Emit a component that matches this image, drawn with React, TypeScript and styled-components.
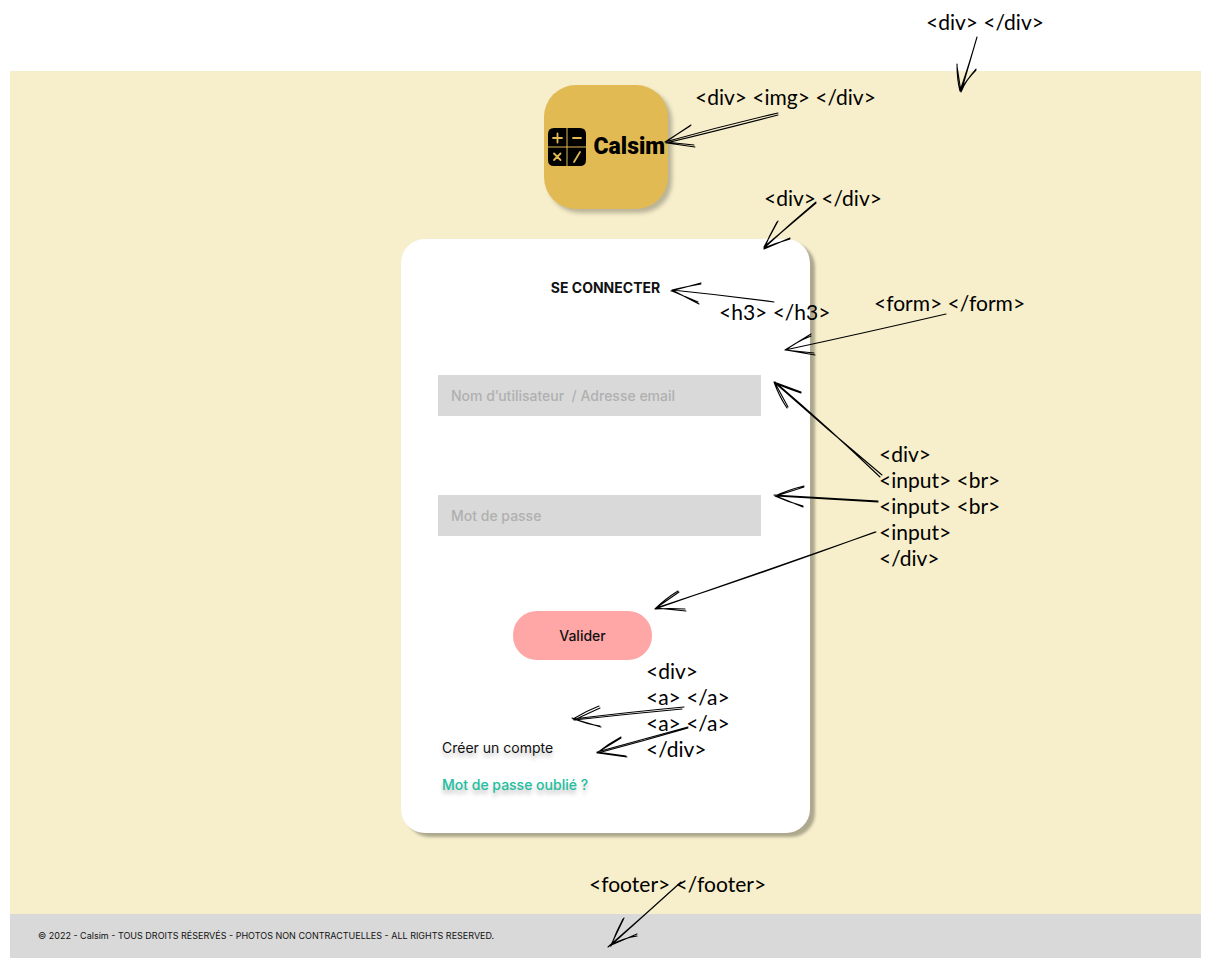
import React from "react";
import styled, { createGlobalStyle } from "styled-components";

const GlobalStyle = createGlobalStyle`
  *, *::before, *::after { box-sizing: border-box; }
  body {
    margin: 0;
    background: #fff;
    color: #111;
    font-family: Inter, "Liberation Sans", sans-serif;
    font-size: 14px;
    line-height: 20px;
  }
`;

const Page = styled.div`
  position: relative;
  min-height: 100vh;
  padding: 71px 10px 10px;
  display: flex;
  flex-direction: column;
  overflow-x: hidden;
`;

const Main = styled.main`
  flex: 1;
  display: flex;
  flex-direction: column;
  align-items: center;
  gap: 30px;
  padding: 14px 0 80px;
  background: #f7efcb;
`;

const LogoTile = styled.div`
  width: 124px;
  height: 124px;
  padding-left: 4px;
  display: flex;
  align-items: center;
  gap: 8px;
  border-radius: 32px;
  background: #e1ba54;
  box-shadow: 4px 4px 4px rgba(0, 0, 0, 0.25);
  color: #000;
`;

const LogoMark = styled.svg`
  flex: none;
  width: 38px;
  height: 38px;
`;

const LogoName = styled.span`
  font-family: Roboto, "Liberation Sans", sans-serif;
  font-size: 23px;
  font-weight: 900;
  line-height: 28px;
`;

const Card = styled.section`
  width: 409px;
  max-width: 100%;
  padding: 39px 0 38px;
  border-radius: 24px;
  background: #fff;
  box-shadow: 5px 4px 3px rgba(0, 0, 0, 0.3);
`;

const Title = styled.h3`
  margin: 0;
  text-align: center;
  font-size: 14px;
  font-weight: 700;
  line-height: 20px;
`;

const LoginForm = styled.form`
  display: flex;
  flex-direction: column;
  padding: 77px 49px 0 37px;
`;

const Field = styled.input`
  width: 100%;
  height: 41px;
  margin-bottom: 79px;
  padding: 0 13px;
  border: 0;
  border-radius: 0;
  background: #d9d9d9;
  color: #111;
  font: 500 14px/20px Inter, "Liberation Sans", sans-serif;
  &::placeholder {
    color: #b0b0b0;
    opacity: 1;
  }
`;

const Submit = styled.button`
  width: 139px;
  height: 49px;
  margin: -4px 0 0 75px;
  border: 0;
  border-radius: 24px;
  background: #ffa6a6;
  color: #111;
  font: 500 14px/20px Inter, "Liberation Sans", sans-serif;
`;

const Links = styled.nav`
  display: flex;
  flex-direction: column;
  align-items: flex-start;
  gap: 17px;
  padding: 78px 41px 0;
`;

const TextLink = styled.a<{ $accent?: boolean }>`
  color: ${(p) => (p.$accent ? "#22bf9f" : "#111")};
  font-weight: ${(p) => (p.$accent ? 500 : 400)};
  text-decoration: none;
  text-shadow: 0 4px 4px rgba(0, 0, 0, 0.25);
`;

const Footer = styled.footer`
  padding: 12px 28px;
  background: #d9d9d9;
  font-size: 9px;
  line-height: 20px;
`;

/* Notes are anchored to the horizontal centre of the page. */
const NoteLayer = styled.div`
  position: absolute;
  inset: 0;
  display: flex;
  justify-content: center;
  pointer-events: none;
`;

const Anchor = styled.div`
  position: relative;
  width: 1px;
`;

const Arrows = styled.svg`
  position: absolute;
  top: 0;
  left: 0;
  width: 1px;
  height: 1px;
  overflow: visible;
  fill: none;
  stroke: #000;
  stroke-width: 1.1;
  stroke-linecap: round;
`;

const Note = styled.div<{ $x: number; $y: number }>`
  position: absolute;
  left: ${(p) => p.$x}px;
  top: ${(p) => p.$y}px;
  color: #000;
  font-family: Lato, "Liberation Sans", sans-serif;
  font-size: 21px;
  line-height: 26px;
  white-space: pre;
`;

const notes = [
  { x: 321, y: 9, text: "<div> </div>" },
  { x: 90, y: 84, text: "<div> <img> </div>" },
  { x: 159, y: 185, text: "<div> </div>" },
  { x: 114, y: 299, text: "<h3> </h3>" },
  { x: 269, y: 290, text: "<form> </form>" },
  { x: 274, y: 441, text: "<div>\n<input> <br>\n<input> <br>\n<input>\n</div>" },
  { x: 41, y: 658, text: "<div>\n<a> </a>\n<a> </a>\n</div>" },
  { x: -16, y: 871, text: "<footer> </footer>" },
];

const arrows = [
  "M977 37 Q970 62 960 91 M977 37 Q968 68 961 92 M957 64 Q957 80 960 91 M957 66 L961 92 M976 70 Q968 78 960 91 M976 69 Q966 80 961 92",
  "M778 113 Q722 126 665 142 M778 115 Q720 130 666 143 M690 126 L665 142 M691 125 L667 141 M694 145 L665 142 M695 147 L667 143",
  "M816 202 Q790 224 764 248 M816 203 L764 247 M777 222 Q769 236 764 249 M778 221 L764 247 M790 238 L764 249 M790 239 Q776 243 764 248",
  "M774 302 Q722 295 672 290 M701 283 L671 291 M701 284 Q684 287 672 290 M698 302 L672 291 M699 304 L672 290",
  "M946 314 Q864 333 785 350 M811 334 L785 350 M811 336 Q796 342 786 350 M814 353 L785 350 M815 355 L786 350",
  "M880 477 Q830 429 775 382 M882 475 Q828 430 774 382 M801 393 Q786 388 775 383 M801 392 L774 382 M787 408 Q779 396 774 382 M788 407 L775 383",
  "M878 501 Q826 498 774 495 M878 502 L776 496 M804 486 Q788 490 775 496 M804 487 L776 496 M803 506 Q788 502 775 496 M803 507 L776 496",
  "M876 532 L655 609 M875 532 Q772 570 656 608 M678 591 Q665 599 655 609 M679 592 L656 608 M685 609 Q668 608 655 609 M686 611 L656 608",
  "M684 707 Q630 712 573 719 M682 709 Q628 714 574 720 M599 706 Q586 711 573 719 M600 708 L574 720 M600 726 Q586 724 572 718 M601 727 L574 719",
  "M688 728 Q643 741 598 753 M688 727 L597 752 M621 737 Q608 744 597 753 M621 738 L598 752 M626 756 L597 752 M627 757 L598 753",
  "M681 882 Q646 914 608 947 M680 883 L610 946 M623 919 Q616 932 611 946 M624 918 L611 945 M637 934 L609 946 M637 936 Q624 938 610 945",
];

export default function App() {
  return (
    <>
      <GlobalStyle />
      <Page>
        <Main>
          <LogoTile>
            <LogoMark viewBox="0 0 38 38" aria-hidden="true">
              <path
                fill="currentColor"
                d="M6 0H18.5V18.5H0V6Q0 0 6 0ZM19.5 0H32Q38 0 38 6V18.5H19.5ZM0 19.5H18.5V38H6Q0 38 0 32ZM19.5 19.5H38V32Q38 38 32 38H19.5Z"
              />
              <path
                fill="none"
                stroke="#e1ba54"
                strokeWidth="1.8"
                strokeLinecap="round"
                d="M5 10H14M9.500 5.500V14.500M25 10H33M6 25.500L12.500 32M12.500 25.500L6 32M32 24L26 34"
              />
            </LogoMark>
            <LogoName>Calsim</LogoName>
          </LogoTile>
          <Card>
            <Title>SE CONNECTER</Title>
            <LoginForm onSubmit={(e) => e.preventDefault()}>
              <Field
                type="text"
                aria-label="Nom d’utilisateur / Adresse email"
                placeholder={"Nom d’utilisateur\u00a0 / Adresse email"}
              />
              <Field type="password" aria-label="Mot de passe" placeholder="Mot de passe" />
              <Submit type="submit">Valider</Submit>
            </LoginForm>
            <Links>
              <TextLink href="#inscription">Créer un compte</TextLink>
              <TextLink href="#oubli" $accent>
                Mot de passe oublié ?
              </TextLink>
            </Links>
          </Card>
        </Main>
        <Footer>
          © 2022 - Calsim - TOUS DROITS RÉSERVÉS - PHOTOS NON CONTRACTUELLES - ALL RIGHTS RESERVED.
        </Footer>
        <NoteLayer>
          <Anchor>
            <Arrows viewBox="605 0 1 1" aria-hidden="true">
              {arrows.map((d) => (
                <path key={d} d={d} />
              ))}
            </Arrows>
            {notes.map((n) => (
              <Note key={`${n.x}-${n.y}`} $x={n.x} $y={n.y}>
                {n.text}
              </Note>
            ))}
          </Anchor>
        </NoteLayer>
      </Page>
    </>
  );
}
